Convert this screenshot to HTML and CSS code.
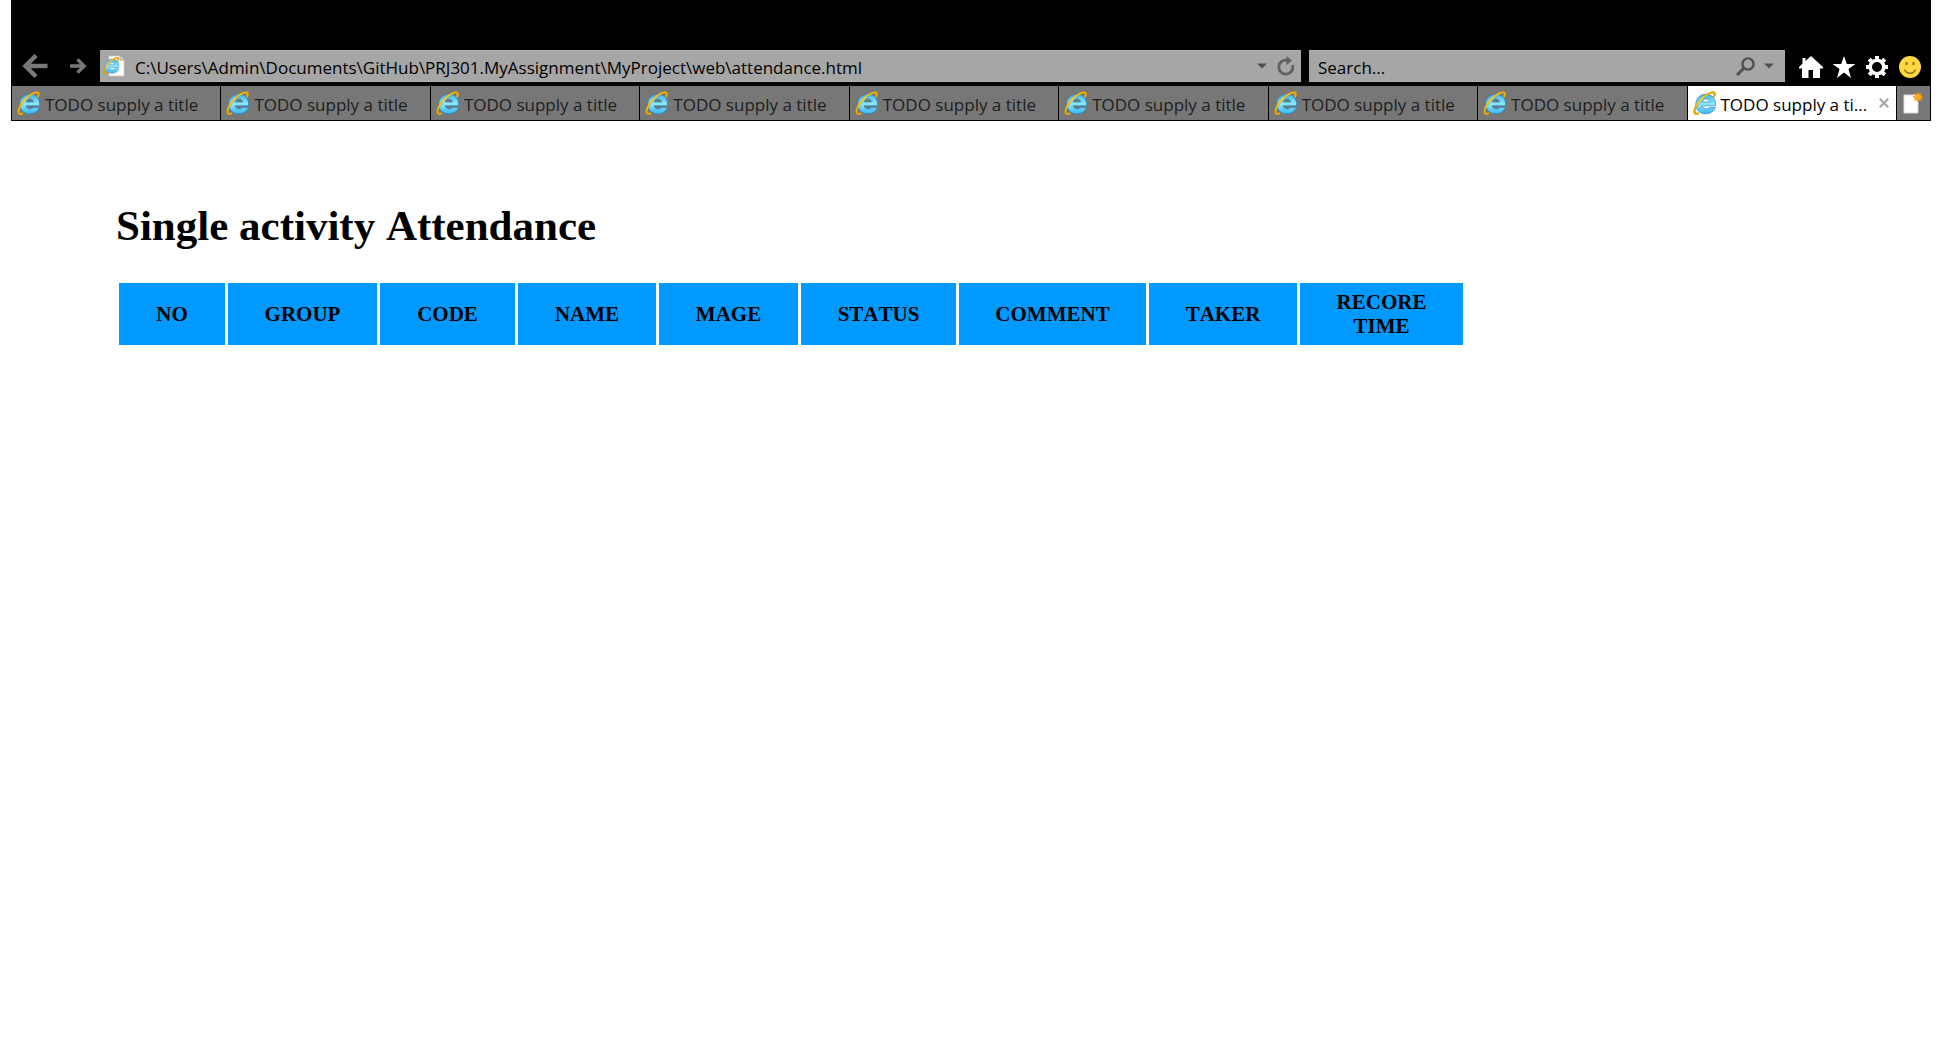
FILE: index.html
```html
<!DOCTYPE html>
<html lang="en">
<head>
<meta charset="utf-8">
<title>TODO supply a title</title>
<link rel="stylesheet" href="styles.css">
</head>
<body>
<svg class="defs" aria-hidden="true">
  <defs>
    <linearGradient id="blue" x1="0" y1="0" x2="0" y2="1">
      <stop offset="0" stop-color="#3db4ee"/><stop offset=".5" stop-color="#8be9ff"/><stop offset="1" stop-color="#38b6f0"/>
    </linearGradient>
    <linearGradient id="gold" x1="0" y1="1" x2="1" y2="0">
      <stop offset="0" stop-color="#e9a500"/><stop offset=".5" stop-color="#ffd83c"/><stop offset="1" stop-color="#f0ab00"/>
    </linearGradient>
    <symbol id="ie" viewBox="0 0 24 24">
      <path d="M22.600 14.800H9.200c.3 2 1.800 3.100 4 3.100 1.500 0 2.500-.4 3.200-1.300h5.900c-1.400 4-4.900 6.200-9.300 6.200C7 22.800 2.800 19 2.800 13.200 2.800 7.400 7 3.200 13 3.200c6.200 0 9.900 4.300 9.600 11.600zM9.300 10.900h7.200c-.3-1.900-1.600-3-3.500-3-2 0-3.300 1.100-3.700 3z" fill="url(#blue)" stroke="#2a86c4" stroke-width=".7"/>
      <path d="M20.800 6C22.600 2.800 22 1 19 1.500 12.500 2.600 3.500 12 1.600 19.200c-.7 3.200.8 4.400 4.400 3" fill="none" stroke="#b98312" stroke-width="2.100"/>
      <path d="M20.800 6C22.600 2.800 22 1 19 1.500 12.500 2.600 3.500 12 1.600 19.200c-.7 3.200.8 4.400 4.400 3" fill="none" stroke="url(#gold)" stroke-width="1.700"/>
    </symbol>
  </defs>
</svg>
<header class="browser">
  <div class="toolbar">
    <nav class="history" aria-label="History">
      <button class="plain" aria-label="Back"><svg width="26" height="24" viewBox="0 0 26 24"><path d="M25.500 12H4M14 1.500L3.500 12 14 22.500" fill="none" stroke="#787878" stroke-width="4.500"/></svg></button>
      <button class="plain" aria-label="Forward"><svg width="17" height="16" viewBox="0 0 17 16"><path d="M0 8H14M7.500 1.300L14.200 8 7.500 14.700" fill="none" stroke="#787878" stroke-width="3.300"/></svg></button>
    </nav>
    <div class="field address">
      <svg width="22" height="22" viewBox="0 0 22 22" aria-hidden="true"><path d="M6 1h11l4 4v16H6z" fill="#fff" stroke="#c9c9c9" stroke-width=".7"/><path d="M17 1v4h4" fill="#ddd" stroke="#888" stroke-width=".7"/><use href="#ie" x="0" y="2" width="17" height="17"/></svg>
      <input type="text" aria-label="Address" value="C:\Users\Admin\Documents\GitHub\PRJ301.MyAssignment\MyProject\web\attendance.html">
      <button class="plain" aria-label="Show addresses"><svg width="10" height="6" viewBox="0 0 10 6"><path d="M0 .5h10L5 5.500z" fill="#505050"/></svg></button>
      <button class="plain" aria-label="Refresh"><svg width="18" height="20" viewBox="0 0 18 20"><path d="M10.500 4.300A7 7 0 1 0 15.500 9" fill="none" stroke="#606060" stroke-width="2.800"/><path d="M9.500 0L15 4.500 9.500 9.300z" fill="#606060"/></svg></button>
    </div>
    <div class="field search">
      <input type="text" aria-label="Search" placeholder="Search...">
      <button class="plain" aria-label="Search"><svg width="19" height="19" viewBox="0 0 19 19"><circle cx="12" cy="7" r="5.600" fill="none" stroke="#505050" stroke-width="2.400"/><path d="M8 11L1 18" stroke="#505050" stroke-width="3"/></svg></button>
      <button class="plain" aria-label="Search options"><svg width="10" height="6" viewBox="0 0 10 6"><path d="M0 .5h10L5 5.500z" fill="#505050"/></svg></button>
    </div>
    <div class="tools">
      <button class="plain" aria-label="Home"><svg width="24" height="22" viewBox="0 0 24 22"><path d="M12 0L6.500 5V2H3.500v5.800L0 11v1.500h3V22h6.500v-8h4.500v8H21v-9.500h3V11z" fill="#fff"/></svg></button>
      <button class="plain" aria-label="Favorites"><svg width="24" height="22" viewBox="0 0 24 22"><path d="M12 0l2.800 8H23.500l-7 5 2.500 9-7-5.400-7 5.400L7.500 13 .5 8h8.700z" fill="#fff"/></svg></button>
      <button class="plain" aria-label="Tools"><svg width="24" height="22" viewBox="0 0 24 22"><circle cx="12" cy="11" r="6.800" fill="none" stroke="#fff" stroke-width="3.600"/><path d="M12 0v4M12 18v4M1 11h4M19 11h4M4.200 3.200L7 6M17 16l2.800 2.800M4.200 18.800L7 16M17 6l2.800-2.800" stroke="#fff" stroke-width="4"/></svg></button>
      <button class="plain" aria-label="Feedback"><svg width="24" height="22" viewBox="0 0 24 22"><circle cx="12" cy="11" r="11" fill="#ffd83f"/><path d="M6.500 13.500c2 5 9 5 11 0" fill="none" stroke="#8c7222" stroke-width="1.500"/><path d="M8.500 6v3M15.500 6v3" stroke="#8c7222" stroke-width="2"/></svg></button>
    </div>
  </div>
  <nav class="tabs" aria-label="Tabs">
    <a class="tab" href="#"><svg class="logo"><use href="#ie"/></svg><span>TODO supply a title</span></a>
    <a class="tab" href="#"><svg class="logo"><use href="#ie"/></svg><span>TODO supply a title</span></a>
    <a class="tab" href="#"><svg class="logo"><use href="#ie"/></svg><span>TODO supply a title</span></a>
    <a class="tab" href="#"><svg class="logo"><use href="#ie"/></svg><span>TODO supply a title</span></a>
    <a class="tab" href="#"><svg class="logo"><use href="#ie"/></svg><span>TODO supply a title</span></a>
    <a class="tab" href="#"><svg class="logo"><use href="#ie"/></svg><span>TODO supply a title</span></a>
    <a class="tab" href="#"><svg class="logo"><use href="#ie"/></svg><span>TODO supply a title</span></a>
    <a class="tab" href="#"><svg class="logo"><use href="#ie"/></svg><span>TODO supply a title</span></a>
    <div class="tab active"><svg class="logo"><use href="#ie"/></svg><span>TODO supply a ti...</span><button class="plain close" aria-label="Close tab"><svg width="10" height="10" viewBox="0 0 10 10"><path d="M.7.7l8.600 8.600M9.300.7L.7 9.300" stroke="#a6a6a6" stroke-width="2.200"/></svg></button></div>
    <button class="plain new-tab" aria-label="New tab"><svg width="20" height="22" viewBox="0 0 20 22"><path d="M1 3h14v18H1z" fill="#fff" stroke="#d8d8d8"/><path d="M15 0v10M10 5h10M11.500 1.500l7 7M18.500 1.500l-7 7" stroke="#f08c0c" stroke-width="1.500"/><circle cx="15" cy="5" r="3.200" fill="#ffa51e"/></svg></button>
  </nav>
</header>
<main class="page">
  <h1>Single activity Attendance</h1>
  <table>
    <colgroup><col class="no"><col class="group"><col class="code"><col class="name"><col class="mage"><col class="status"><col class="comment"><col class="taker"><col class="time"></colgroup>
    <thead>
      <tr><th scope="col">NO</th><th scope="col">GROUP</th><th scope="col">CODE</th><th scope="col">NAME</th><th scope="col">MAGE</th><th scope="col">STATUS</th><th scope="col">COMMENT</th><th scope="col">TAKER</th><th scope="col">RECORE TIME</th></tr>
    </thead>
  </table>
</main>
</body>
</html>
```
FILE: styles.css
```css
* { box-sizing: border-box; }
body { margin: 0 11px; background: #fff; color: #000; }
.defs { position: absolute; width: 0; height: 0; }
button, input { font: inherit; color: inherit; }
svg { display: block; flex: none; }
.plain { display: block; padding: 0; border: 0; background: none; }

.browser {
  padding: 50px 1px 1px;
  background: #000;
  font-family: "Segoe UI", "Open Sans", sans-serif;
  font-size: 17px;
}
.toolbar { display: flex; gap: 8px; height: 36px; padding-bottom: 4px; }
.history { display: flex; align-items: center; gap: 22px; width: 80px; padding-left: 10px; }
.field {
  display: flex;
  align-items: center;
  background: #a6a6a6;
  border-top: 1px solid #b0b0b0;
  border-bottom: 1px solid #b0b0b0;
}
.field input {
  flex: 1;
  min-width: 0;
  height: 30px;
  padding: 2px 0 0;
  border: 0;
  outline: 0;
  background: none;
}
.field input::placeholder { color: #000; opacity: 1; }
.address { flex: 1; gap: 10px; padding: 0 6px 0 3px; }
.search { flex: 0 0 476px; gap: 9px; padding: 0 11px 0 9px; }
.tools { display: flex; align-items: center; gap: 9px; padding: 2px 8px 0 6px; }

.tabs { display: flex; gap: 1px; height: 34px; }
.tab {
  display: flex;
  flex: 1;
  align-items: center;
  gap: 4px;
  min-width: 0;
  padding-left: 5px;
  background: #777;
  color: #1e1e1e;
  text-decoration: none;
  white-space: nowrap;
}
.tab span { padding-top: 2px; }
.logo { width: 24px; height: 24px; }
.active { background: #fff; color: #000; }
.close { margin: 0 7px 0 auto; }
.new-tab { display: flex; flex: 0 0 33px; justify-content: center; align-items: center; background: #777; }

.page {
  padding: 80px 105px;
  font-family: "Times New Roman", "Liberation Serif", serif;
  font-kerning: none;
}
h1 { margin: 0 0 29px; font-size: 43px; line-height: 50px; }
table { table-layout: fixed; width: 1350px; border-spacing: 3px; font-size: 21px; }
th { height: 62px; padding: 7px 34px; background: #09f; line-height: 24px; }
.no { width: 106px; }
.group { width: 149px; }
.code { width: 135px; }
.name { width: 138px; }
.mage { width: 139px; }
.status { width: 155px; }
.comment { width: 187px; }
.taker { width: 148px; }
.time { width: 163px; }
```
